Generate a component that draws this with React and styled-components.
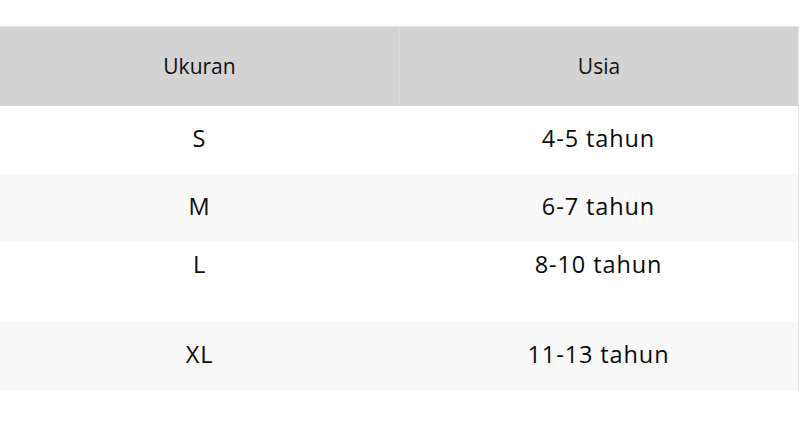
import React from "react";
import styled, { createGlobalStyle } from "styled-components";

const rows = [
    { size: "S", age: "4-5 tahun" },
    { size: "M", age: "6-7 tahun" },
    { size: "L", age: "8-10 tahun", tall: true },
    { size: "XL", age: "11-13 tahun" },
];

const App = () => {
    return (
        <>
            <GlobalStyle />
            <Page>
                <Table>
                    <HeaderRow>
                        <HeaderCell>Ukuran</HeaderCell>
                        <HeaderCell $divider>Usia</HeaderCell>
                    </HeaderRow>
                    {rows.map((row, index) => (
                        <Row key={row.size} $striped={index % 2 === 1} $tall={row.tall}>
                            <Cell>{row.size}</Cell>
                            <Cell>{row.age}</Cell>
                        </Row>
                    ))}
                </Table>
            </Page>
        </>
    );
};

export default App;

const GlobalStyle = createGlobalStyle`
    body {
        margin: 0;
        background: #ffffff;
        font-family: "Open Sans", "Noto Sans", sans-serif;
        color: #111111;
    }
`;

const Page = styled.div`
    width: 800px;
    height: 445px;
    padding-top: 26px;
    box-sizing: border-box;
`;

const Table = styled.div`
    width: 798px;
    border-right: 1px solid #e4e4e4;
`;

const HeaderRow = styled.div`
    display: grid;
    grid-template-columns: 399px 1fr;
    height: 80px;
    background: #d3d3d3;
    border-top: 1px solid #e0e0e0;
    box-sizing: border-box;
`;

const HeaderCell = styled.div`
    display: flex;
    align-items: center;
    justify-content: center;
    padding-bottom: 2px;
    font-size: 21px;
    border-left: ${(p) => (p.$divider ? "1px solid #dcdcdc" : "none")};
`;

const Row = styled.div`
    display: grid;
    grid-template-columns: 399px 1fr;
    height: ${(p) => (p.$tall ? "80px" : "68px")};
    align-items: ${(p) => (p.$tall ? "start" : "center")};
    padding-top: ${(p) => (p.$tall ? "5px" : "0")};
    padding-bottom: ${(p) => (p.$tall ? "0" : "4px")};
    box-sizing: border-box;
    background: ${(p) => (p.$striped ? "#f8f8f8" : "#ffffff")};
`;

const Cell = styled.div`
    text-align: center;
    font-size: 23.5px;
    letter-spacing: 0.9px;
    line-height: 34px;
    color: #0a0a0a;
`;
